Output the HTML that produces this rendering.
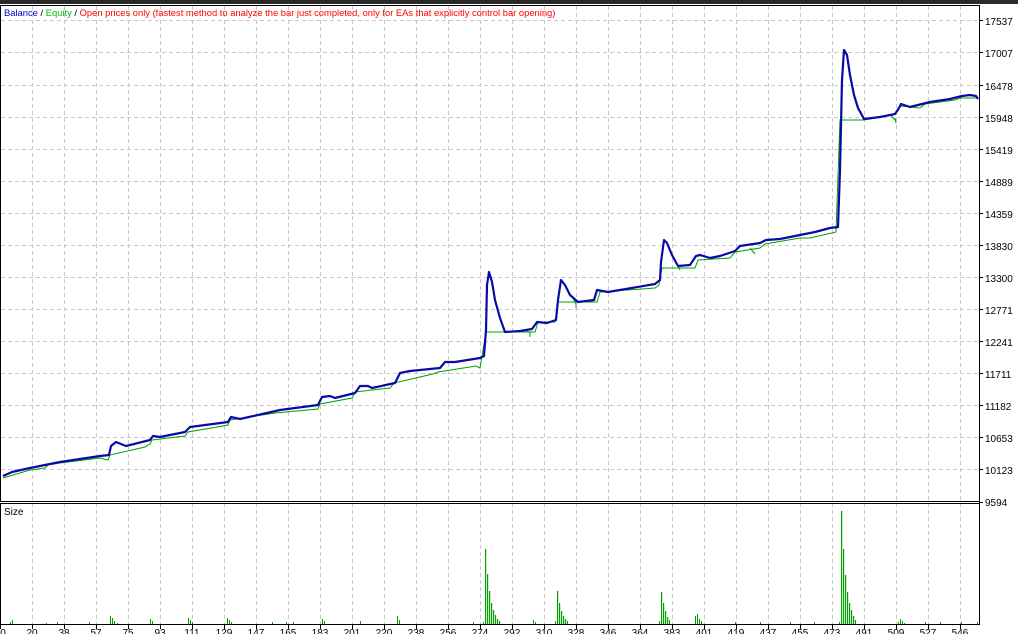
<!DOCTYPE html>
<html><head><meta charset="utf-8"><style>
html,body{margin:0;padding:0;background:#fff;}
body{width:1018px;height:634px;overflow:hidden;position:relative;font-family:"Liberation Sans","DejaVu Sans",sans-serif;}
svg{position:absolute;left:0;top:0;}
</style></head><body>
<svg width="1018" height="634" viewBox="0 0 1018 634" xmlns="http://www.w3.org/2000/svg" font-family="Liberation Sans, DejaVu Sans, sans-serif" font-size="10">
<rect x="0" y="0" width="1018" height="4" fill="#2a2a2a"/>
<g stroke="#c8c8c8" stroke-width="1" stroke-dasharray="4,3" fill="none">
<path d="M32.5 6V625M64.5 6V625M96.5 6V625M128.5 6V625M160.5 6V625M192.5 6V625M224.5 6V625M256.5 6V625M288.5 6V625M320.5 6V625M352.5 6V625M384.5 6V625M416.5 6V625M448.5 6V625M480.5 6V625M512.5 6V625M544.5 6V625M576.5 6V625M608.5 6V625M640.5 6V625M672.5 6V625M704.5 6V625M736.5 6V625M768.5 6V625M800.5 6V625M832.5 6V625M864.5 6V625M896.5 6V625M928.5 6V625M960.5 6V625"/>
<path d="M1 20.5H979M1 52.5H979M1 85.5H979M1 117.5H979M1 149.5H979M1 181.5H979M1 213.5H979M1 245.5H979M1 277.5H979M1 309.5H979M1 341.5H979M1 373.5H979M1 405.5H979M1 437.5H979M1 469.5H979"/>
</g>
<g stroke="#000" fill="none" stroke-width="1">
<rect x="0.5" y="5.5" width="979" height="496"/>
<rect x="0.5" y="503.5" width="979" height="121"/>
<path d="M979 20.5h4M979 52.5h4M979 85.5h4M979 117.5h4M979 149.5h4M979 181.5h4M979 213.5h4M979 245.5h4M979 277.5h4M979 309.5h4M979 341.5h4M979 373.5h4M979 405.5h4M979 437.5h4M979 469.5h4M979 502.5h4"/>
<path d="M0.5 625v4M32.5 625v4M64.5 625v4M96.5 625v4M128.5 625v4M160.5 625v4M192.5 625v4M224.5 625v4M256.5 625v4M288.5 625v4M320.5 625v4M352.5 625v4M384.5 625v4M416.5 625v4M448.5 625v4M480.5 625v4M512.5 625v4M544.5 625v4M576.5 625v4M608.5 625v4M640.5 625v4M672.5 625v4M704.5 625v4M736.5 625v4M768.5 625v4M800.5 625v4M832.5 625v4M864.5 625v4M896.5 625v4M928.5 625v4M960.5 625v4"/>
</g>
<g fill="#000">
<text x="985" y="25">17537</text><text x="985" y="57">17007</text><text x="985" y="90">16478</text><text x="985" y="122">15948</text>
<text x="985" y="154">15419</text><text x="985" y="186">14889</text><text x="985" y="218">14359</text><text x="985" y="250">13830</text>
<text x="985" y="282">13300</text><text x="985" y="314">12771</text><text x="985" y="346">12241</text><text x="985" y="378">11711</text>
<text x="985" y="410">11182</text><text x="985" y="442">10653</text><text x="985" y="474">10123</text><text x="985" y="506">9594</text>
</g>
<g fill="#000" text-anchor="middle">
<text x="3" y="636">0</text><text x="32" y="636">20</text><text x="64" y="636">38</text><text x="96" y="636">57</text><text x="128" y="636">75</text><text x="160" y="636">93</text><text x="192" y="636">111</text><text x="224" y="636">129</text><text x="256" y="636">147</text><text x="288" y="636">165</text><text x="320" y="636">183</text><text x="352" y="636">201</text><text x="384" y="636">220</text><text x="416" y="636">238</text><text x="448" y="636">256</text><text x="480" y="636">274</text><text x="512" y="636">292</text><text x="544" y="636">310</text><text x="576" y="636">328</text><text x="608" y="636">346</text><text x="640" y="636">364</text><text x="672" y="636">383</text><text x="704" y="636">401</text><text x="736" y="636">419</text><text x="768" y="636">437</text><text x="800" y="636">455</text><text x="832" y="636">473</text><text x="864" y="636">491</text><text x="896" y="636">509</text><text x="928" y="636">527</text><text x="960" y="636">546</text>
</g>
<text x="4" y="16" font-size="9.4"><tspan fill="#0000c0">Balance</tspan><tspan fill="#000"> / </tspan><tspan fill="#00c000">Equity</tspan><tspan fill="#000"> / </tspan><tspan fill="#ff0000">Open prices only (fastest method to analyze the bar just completed, only for EAs that explicitly control bar opening)</tspan></text>
<text x="4" y="515" fill="#000">Size</text>
<polyline fill="none" stroke="#00a000" stroke-width="1" points="3,478 30,470 45,468 48,465 60,463 100,458 108,460 110,455 145,447 150,444 152,440 185,436 188,432 228,425 230,420 275,413 318,409 320,404 352,398 355,392 390,388 394,383 433,374 438,372 476,366 480,368 486,332 535,332 538,322 555,322 558,302 597,302 600,292 655,288 659,285 662,268 695,268 698,260 730,258 735,252 760,248 765,244 800,238 810,238 836,232 840,120 864,120 893,115 897,112 900,106 920,108 925,104 955,100 960,98 977,98"/>
<g fill="none" stroke="#00a000" stroke-width="1"><path d="M526 330l4 3v4M573 298l3 6v4M676 262l4 8M750 248l5 6M890 114l5 6M895 118l1 5"/></g>
<polyline fill="none" stroke="#0a0aa8" stroke-width="2.2" stroke-linejoin="round" points="3,476 12,472 30,468 60,462 100,456 109,455 111,446 116,442 121,444 126,446 150,440 153,436 160,437 185,432 190,427 228,422 231,417 240,419 280,410 318,405 322,397 330,396 335,398 355,393 360,386 368,386 372,388 395,383 400,373 410,371 440,368 445,362 455,362 480,358 484,356 486,330 487,285 489,272 492,282 495,300 500,318 505,332 520,331 532,329 537,322 547,323 556,320 558,300 561,280 565,285 570,295 578,302 594,300 597,290 608,292 620,290 655,284 660,280 661,262 664,240 667,243 672,255 678,266 690,265 696,256 700,255 710,258 720,256 735,251 740,246 760,243 766,240 780,239 800,235 815,232 830,228 838,227 840,170 842,80 844,50 847,55 850,75 854,95 858,108 864,119 880,117 895,114 899,108 901,104 910,107 930,102 950,99 962,96 970,95 976,96 978,99"/>
<g fill="#00a000">
<rect x="10" y="622" width="1" height="2"/><rect x="12" y="620" width="1" height="4"/><rect x="46" y="623" width="1" height="1"/><rect x="57" y="622" width="1" height="2"/><rect x="89" y="622" width="1" height="2"/>
<rect x="110" y="616" width="1" height="8"/><rect x="112" y="618" width="1" height="6"/><rect x="114" y="621" width="1" height="3"/><rect x="117" y="623" width="1" height="1"/>
<rect x="150" y="619" width="1" height="5"/><rect x="152" y="621" width="1" height="3"/>
<rect x="188" y="618" width="1" height="6"/><rect x="190" y="620" width="1" height="4"/><rect x="192" y="622" width="1" height="2"/>
<rect x="227" y="618" width="1" height="6"/><rect x="229" y="620" width="1" height="4"/><rect x="231" y="622" width="1" height="2"/>
<rect x="272" y="622" width="1" height="2"/><rect x="286" y="622" width="1" height="2"/><rect x="293" y="622" width="1" height="2"/>
<rect x="322" y="619" width="1" height="5"/><rect x="324" y="621" width="1" height="3"/>
<rect x="360" y="621" width="1" height="3"/><rect x="397" y="616" width="1" height="8"/><rect x="399" y="620" width="1" height="4"/>
<rect x="473" y="622" width="1" height="2"/><rect x="483" y="622" width="1" height="2"/>
<rect x="485" y="549" width="1.2" height="75"/><rect x="487" y="574" width="1.2" height="50"/><rect x="489" y="591" width="1.2" height="33"/><rect x="491" y="603" width="1.2" height="21"/><rect x="493" y="610" width="1.2" height="14"/><rect x="495" y="615" width="1.2" height="9"/><rect x="497" y="619" width="1.2" height="5"/><rect x="499" y="621" width="1.2" height="3"/>
<rect x="533" y="620" width="1" height="4"/><rect x="535" y="622" width="1" height="2"/>
<rect x="555" y="621" width="1" height="3"/><rect x="557" y="591" width="1.2" height="33"/><rect x="559" y="603" width="1.2" height="21"/><rect x="561" y="611" width="1.2" height="13"/><rect x="563" y="616" width="1.2" height="8"/><rect x="565" y="619" width="1.2" height="5"/><rect x="567" y="621" width="1" height="3"/>
<rect x="659" y="621" width="1" height="3"/><rect x="661" y="592" width="1.2" height="32"/><rect x="663" y="603" width="1.2" height="21"/><rect x="665" y="611" width="1.2" height="13"/><rect x="667" y="617" width="1.2" height="7"/><rect x="669" y="620" width="1" height="4"/>
<rect x="695" y="616" width="1" height="8"/><rect x="697" y="614" width="1" height="10"/><rect x="699" y="619" width="1" height="5"/><rect x="701" y="621" width="1" height="3"/>
<rect x="735" y="622" width="1" height="2"/><rect x="760" y="622" width="1" height="2"/><rect x="790" y="622" width="1" height="2"/><rect x="814" y="622" width="1" height="2"/>
<rect x="839" y="622" width="1" height="2"/><rect x="841" y="511" width="1.2" height="113"/><rect x="843" y="549" width="1.2" height="75"/><rect x="845" y="575" width="1.2" height="49"/><rect x="847" y="592" width="1.2" height="32"/><rect x="849" y="603" width="1.2" height="21"/><rect x="851" y="610" width="1.2" height="14"/><rect x="853" y="616" width="1.2" height="8"/><rect x="855" y="620" width="1" height="4"/>
<rect x="898" y="622" width="1" height="2"/><rect x="900" y="619" width="1" height="5"/><rect x="902" y="621" width="1" height="3"/><rect x="904" y="623" width="1" height="1"/>
<rect x="925" y="622" width="1" height="2"/><rect x="940" y="622" width="1" height="2"/><rect x="961" y="622" width="1" height="2"/><rect x="977" y="622" width="1" height="2"/>
</g>
</svg>
</body></html>
